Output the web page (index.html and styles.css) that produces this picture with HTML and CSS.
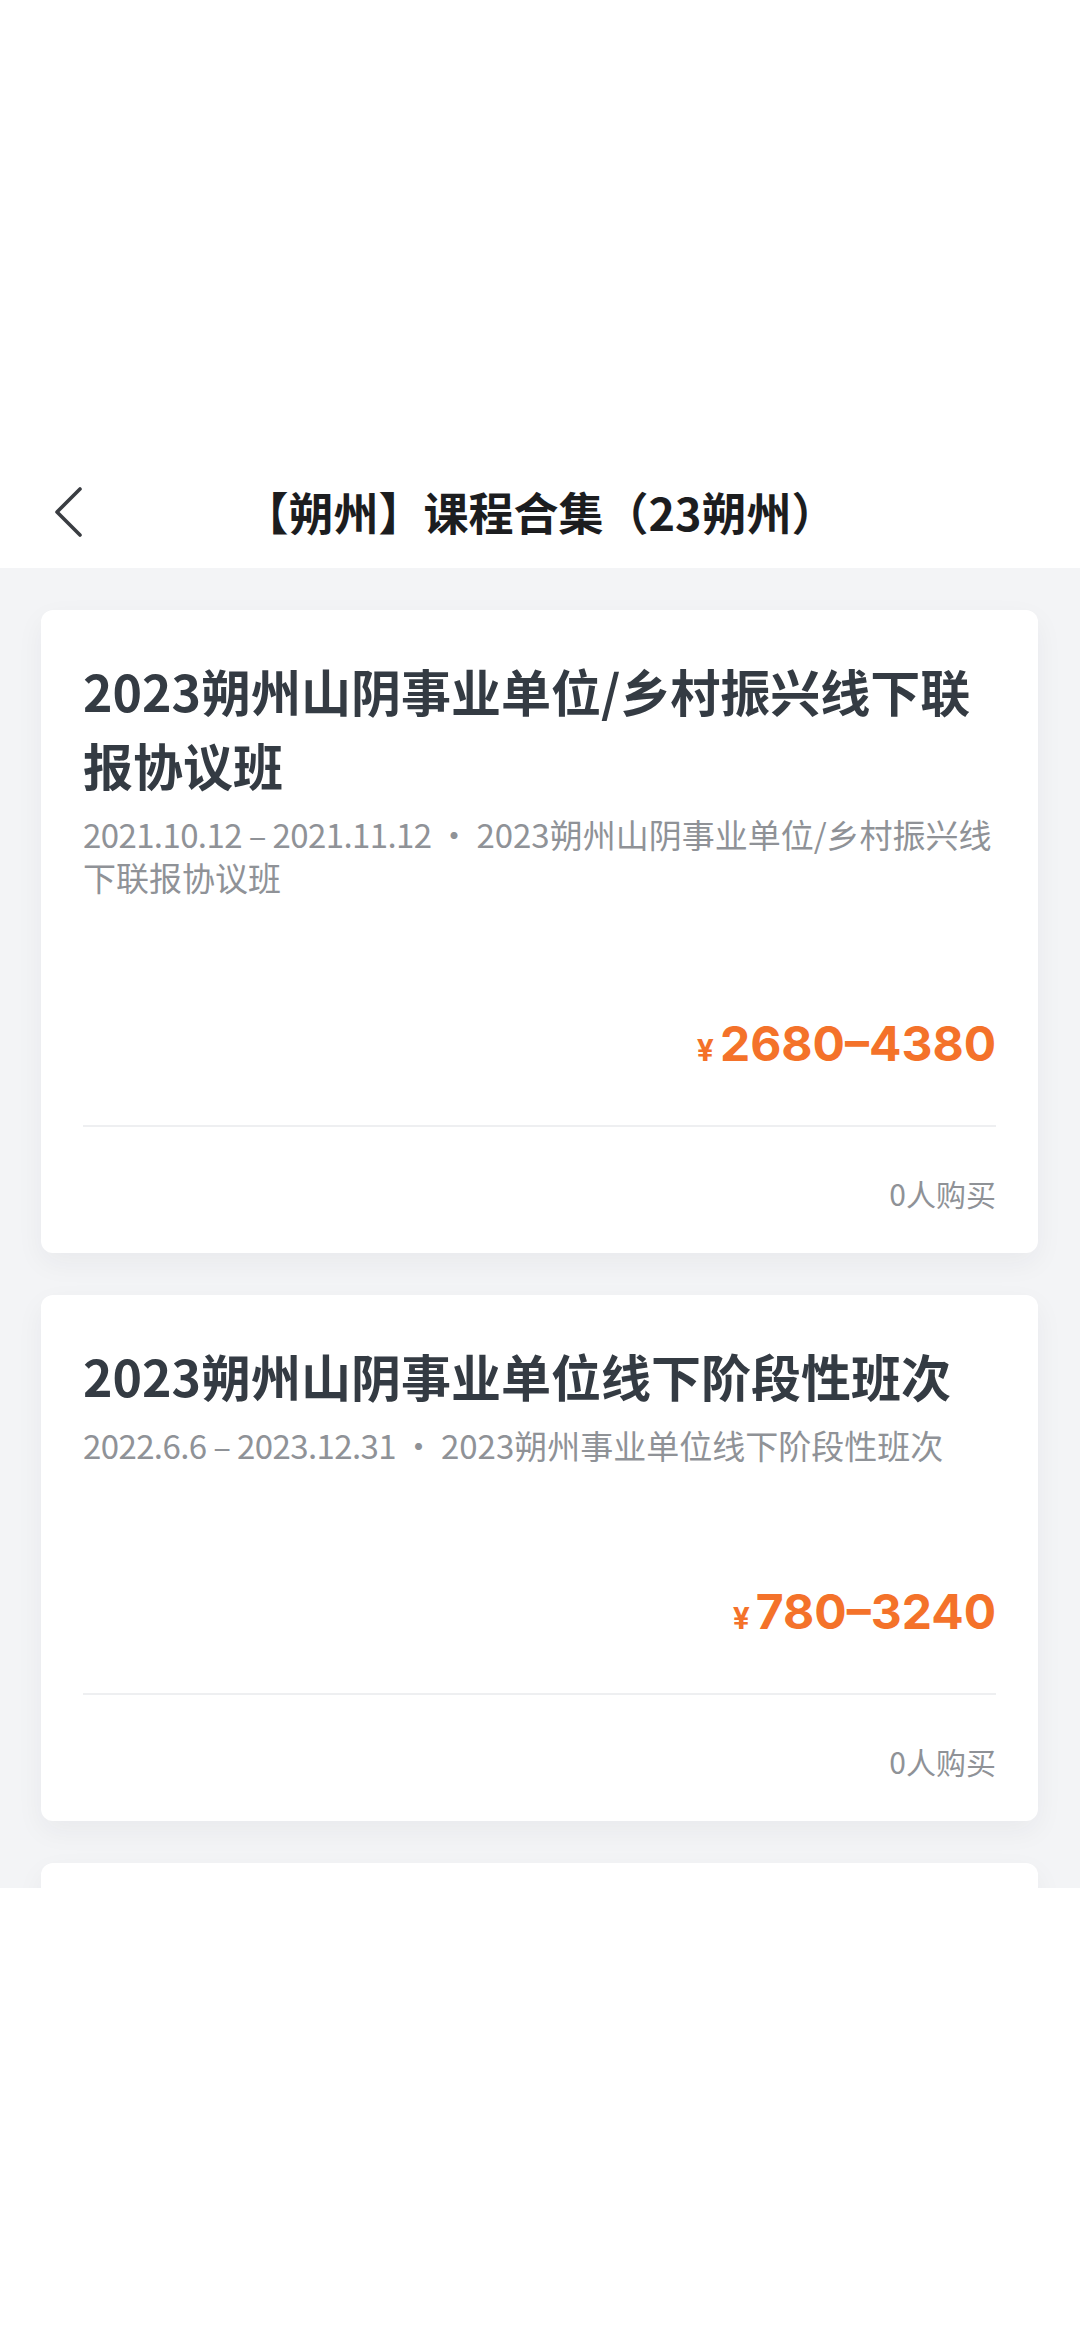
FILE: index.html
```html
<!DOCTYPE html>
<html lang="zh-CN">
<head>
<meta charset="utf-8">
<title>【朔州】课程合集（23朔州）</title>
<link rel="stylesheet" href="styles.css">
</head>
<body>
<div class="status"></div>
<header class="nav">
  <div class="nav-left">
    <svg class="back" viewBox="0 0 30 50" width="30" height="50" aria-hidden="true">
      <polyline points="26,2 3,25 26,48" fill="none" stroke="#3a3d42" stroke-width="3.6" stroke-linecap="round" stroke-linejoin="round"/>
    </svg>
  </div>
  <h1 class="nav-title">【朔州】课程合集（23朔州）</h1>
  <div class="nav-right"></div>
</header>
<main class="list">
  <section class="card">
    <h2 class="card-title">2023朔州山阴事业单位/乡村振兴线下联报协议班</h2>
    <p class="card-sub"><span class="date">2021.10.12 – 2021.11.12</span><span class="dot">·</span><span>2023朔州山阴事业单位/乡村振兴线下联报协议班</span></p>
    <div class="price"><span class="yen">¥</span><span class="num">2680–4380</span></div>
    <div class="divider"></div>
    <div class="buyers">0人购买</div>
  </section>
  <section class="card">
    <h2 class="card-title">2023朔州山阴事业单位线下阶段性班次</h2>
    <p class="card-sub"><span class="date">2022.6.6 – 2023.12.31</span><span class="dot">·</span><span>2023朔州事业单位线下阶段性班次</span></p>
    <div class="price"><span class="yen">¥</span><span class="num">780–3240</span></div>
    <div class="divider"></div>
    <div class="buyers">0人购买</div>
  </section>
  <section class="card">
    <h2 class="card-title">2023朔州山阴事业单位线下课程</h2>
    <p class="card-sub"><span class="date">2022.6.6 – 2023.12.31</span><span class="dot">·</span><span>2023朔州事业单位线下课程</span></p>
  </section>
</main>
<div class="bottom"></div>
</body>
</html>
```
FILE: styles.css
```css
html, body {
  margin: 0;
  padding: 0;
  background: #ffffff;
}
body {
  width: 1080px;
  height: 2339px;
  overflow: hidden;
  font-family: "Noto Sans CJK SC", "Noto Sans", sans-serif;
}
.status {
  height: 456px;
  background: #ffffff;
}
.nav {
  height: 112px;
  display: grid;
  grid-template-columns: 1fr auto 1fr;
  align-items: center;
  background: #ffffff;
}
.nav-left {
  padding-left: 54px;
  display: flex;
  align-items: center;
}
.back {
  display: block;
}
.nav-title {
  margin: 0;
  font-size: 45px;
  font-weight: 700;
  color: #1c1d1f;
  line-height: 60px;
  letter-spacing: 0;
}
.list {
  height: 1320px;
  overflow: hidden;
  box-sizing: border-box;
  background: #f3f4f6;
  padding: 42px 42px 0 41px;
  display: flex;
  flex-direction: column;
  gap: 42px;
}
.card {
  flex: none;
  background: #ffffff;
  border-radius: 12px;
  box-shadow: 0 10px 28px rgba(30, 40, 60, 0.05);
  padding: 43px 42px 38px 42px;
}
.card-title {
  margin: 0;
  font-size: 50px;
  line-height: 74px;
  font-weight: 700;
  color: #343b43;
}
.card-sub {
  margin: 12px 0 0 0;
  font-size: 33px;
  line-height: 43px;
  color: #8f9297;
  font-weight: 400;
}
.date {
  letter-spacing: -0.6px;
}
.dot {
  margin: 0 6px;
}
.price {
  margin-top: 110px;
  height: 70px;
  display: flex;
  justify-content: flex-end;
  align-items: baseline;
  line-height: 70px;
  color: #f4722a;
  font-family: "Inter", "Roboto", sans-serif;
  font-weight: 700;
}
.yen {
  font-size: 30px;
  margin-right: 6px;
}
.num {
  font-size: 48px;
  letter-spacing: 0;
}
.divider {
  margin-top: 46px;
  height: 2px;
  background: #eeeff1;
}
.buyers {
  margin-top: 44px;
  text-align: right;
  font-size: 30px;
  line-height: 44px;
  color: #8f9297;
}
.bottom {
  height: 451px;
  background: #ffffff;
}
```
